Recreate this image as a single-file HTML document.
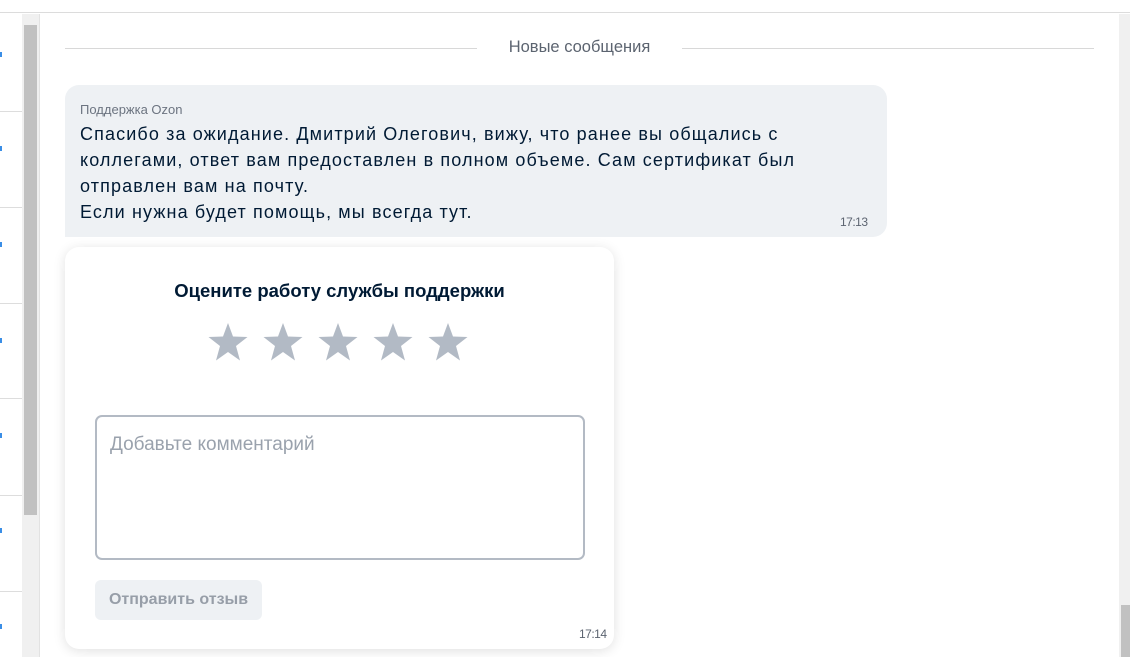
<!DOCTYPE html>
<html><head><meta charset="utf-8"><style>
*{margin:0;padding:0;box-sizing:border-box}
body{width:1130px;height:657px;overflow:hidden;background:#fff;font-family:"Liberation Sans",sans-serif;position:relative}
.abs{position:absolute}
</style></head><body>
<div class="abs" style="left:0;top:0;width:1130px;height:13px;background:#fff;border-bottom:1px solid #dcdcdc"></div>
<div class="abs" style="left:0;top:14px;width:22px;height:643px;background:#fff"></div>
<div class="abs" style="left:0;top:111px;width:22px;height:1px;background:#ddd"></div>
<div class="abs" style="left:0;top:207px;width:22px;height:1px;background:#ddd"></div>
<div class="abs" style="left:0;top:303px;width:22px;height:1px;background:#ddd"></div>
<div class="abs" style="left:0;top:398px;width:22px;height:1px;background:#ddd"></div>
<div class="abs" style="left:0;top:495px;width:22px;height:1px;background:#ddd"></div>
<div class="abs" style="left:0;top:591px;width:22px;height:1px;background:#ddd"></div>
<div class="abs" style="left:0;top:52px;width:2px;height:5px;background:#3a8ee6"></div>
<div class="abs" style="left:0;top:146px;width:2px;height:5px;background:#3a8ee6"></div>
<div class="abs" style="left:0;top:242px;width:2px;height:5px;background:#3a8ee6"></div>
<div class="abs" style="left:0;top:338px;width:2px;height:5px;background:#3a8ee6"></div>
<div class="abs" style="left:0;top:433px;width:2px;height:5px;background:#3a8ee6"></div>
<div class="abs" style="left:0;top:528px;width:2px;height:5px;background:#3a8ee6"></div>
<div class="abs" style="left:0;top:624px;width:2px;height:5px;background:#3a8ee6"></div>
<div class="abs" style="left:22px;top:14px;width:17px;height:643px;background:#f0f0f0"></div>
<div class="abs" style="left:24px;top:25px;width:13px;height:490px;background:#c1c1c1"></div>
<div class="abs" style="left:39px;top:14px;width:1px;height:643px;background:#e2e2e2"></div>
<div class="abs" style="left:1119px;top:14px;width:11px;height:643px;background:#f0f0f0"></div>
<div class="abs" style="left:1121px;top:605px;width:9px;height:52px;background:#c1c1c1"></div>
<div class="abs" style="left:65px;top:48px;width:412px;height:1px;background:#d8d8d8"></div>
<div class="abs" style="left:682px;top:48px;width:412px;height:1px;background:#d8d8d8"></div>
<div class="abs" style="left:477px;top:38px;width:205px;text-align:center;font-size:16.5px;color:#5c6470">Новые сообщения</div>
<div class="abs" style="left:65px;top:85px;width:822px;height:152px;background:#eef1f4;border-radius:14px 14px 14px 0"></div>
<div class="abs" style="left:80px;top:102px;font-size:13px;color:#6c7480">Поддержка Ozon</div>
<div class="abs" style="left:80px;top:121px;width:735px;font-size:18px;line-height:26px;color:#001a34;letter-spacing:1.12px">Спасибо за ожидание. Дмитрий Олегович, вижу, что ранее вы общались с коллегами, ответ вам предоставлен в полном объеме. Сам сертификат был отправлен вам на почту.<br>Если нужна будет помощь, мы всегда тут.</div>
<div class="abs" style="left:840px;top:215px;font-size:12px;color:#5c6470;letter-spacing:-0.5px">17:13</div>
<div class="abs" style="left:65px;top:247px;width:549px;height:402px;background:#fff;border-radius:14px;box-shadow:0 2px 12px rgba(0,0,0,0.12)"></div>
<div class="abs" style="left:65px;top:280px;width:549px;text-align:center;font-size:18.5px;font-weight:bold;color:#001a34">Оцените работу службы поддержки</div>
<svg class="abs" style="left:205px;top:321px" width="266" height="44" viewBox="0 0 266 44">
<defs><polygon id="s" points="20,2 25,15.5 39.5,16 28,25 32,39.5 20,31 8,39.5 12,25 0.5,16 15,15.5"/></defs>
<g fill="#b2bac5"><use href="#s" x="3"/><use href="#s" x="58"/><use href="#s" x="113"/><use href="#s" x="168"/><use href="#s" x="223"/></g>
</svg>
<div class="abs" style="left:95px;top:415px;width:490px;height:145px;border:2px solid #b3bac4;border-radius:7px"></div>
<div class="abs" style="left:110px;top:434px;font-size:19px;color:#9aa2ad">Добавьте комментарий</div>
<div class="abs" style="left:95px;top:580px;width:167px;height:40px;background:#eef1f4;border-radius:6px;text-align:center;line-height:40px;font-size:16px;font-weight:bold;color:#979ea8">Отправить отзыв</div>
<div class="abs" style="left:579px;top:627px;font-size:12px;color:#5c6470;letter-spacing:-0.5px">17:14</div>
</body></html>
